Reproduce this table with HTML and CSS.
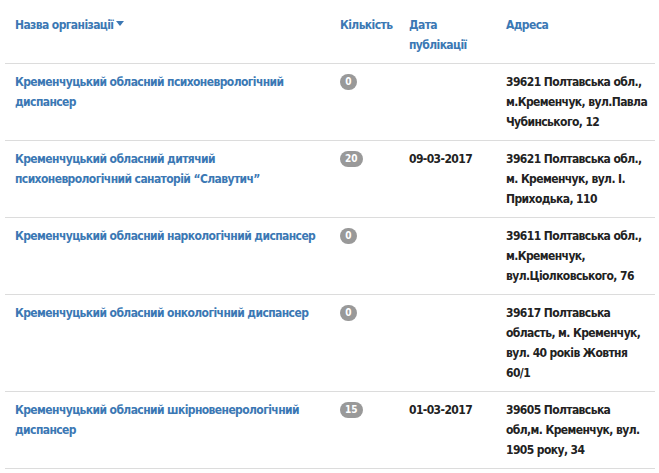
FILE: index.html
```html
<!DOCTYPE html>
<html lang="uk">
<head>
<meta charset="utf-8">
<link rel="stylesheet" href="styles.css">
</head>
<body>
<table class="orgs">
  <colgroup>
    <col class="c-name"><col class="c-count"><col class="c-date"><col class="c-addr">
  </colgroup>
  <thead>
    <tr>
      <th><a class="link" href="#">Назва організації<span class="caret"></span></a></th>
      <th><a class="link" href="#">Кількість</a></th>
      <th><a class="link" href="#">Дата публікації</a></th>
      <th class="addr"><a class="link" href="#">Адреса</a></th>
    </tr>
  </thead>
  <tbody>
    <tr>
      <td><a class="link" href="#">Кременчуцький обласний психоневрологічний диспансер</a></td>
      <td><span class="badge">0</span></td>
      <td class="date"></td>
      <td class="addr">39621 Полтавська обл., м.Кременчук, вул.Павла Чубинського, 12</td>
    </tr>
    <tr>
      <td><a class="link" href="#">Кременчуцький обласний дитячий психоневрологічний санаторій “Славутич”</a></td>
      <td><span class="badge">20</span></td>
      <td class="date">09-03-2017</td>
      <td class="addr">39621 Полтавська обл., м. Кременчук, вул. І. Приходька, 110</td>
    </tr>
    <tr>
      <td><a class="link" href="#">Кременчуцький обласний наркологічний диспансер</a></td>
      <td><span class="badge">0</span></td>
      <td class="date"></td>
      <td class="addr">39611 Полтавська обл., м.Кременчук, вул.Ціолковського, 76</td>
    </tr>
    <tr>
      <td><a class="link" href="#">Кременчуцький обласний онкологічний диспансер</a></td>
      <td><span class="badge">0</span></td>
      <td class="date"></td>
      <td class="addr">39617 Полтавська область, м. Кременчук, вул. 40 років Жовтня 60/1</td>
    </tr>
    <tr>
      <td><a class="link" href="#">Кременчуцький обласний шкірновенерологічний диспансер</a></td>
      <td><span class="badge">15</span></td>
      <td class="date">01-03-2017</td>
      <td class="addr">39605 Полтавська обл,м. Кременчук, вул. 1905 року, 34</td>
    </tr>
  </tbody>
</table>
</body>
</html>
```

FILE: styles.css
```css
html, body {
  margin: 0;
  padding: 0;
  background: #fff;
}

body {
  font-family: "DejaVu Sans Condensed", "DejaVu Sans", sans-serif;
  font-stretch: condensed;
  font-weight: bold;
  font-size: 12px;
  letter-spacing: -0.6px;
  line-height: 20px;
  color: #222;
}

.orgs {
  margin: 7px 0 0 5px;
  width: 650px;
  border-collapse: collapse;
  table-layout: fixed;
}

.c-name { width: 325px; }
.c-count { width: 69px; }
.c-date { width: 97px; }
.c-addr { width: 159px; }

.orgs th,
.orgs td {
  padding: 8px 10px;
  text-align: left;
  vertical-align: top;
}

.orgs th.addr,
.orgs td.addr {
  padding-right: 7px;
}

.orgs th {
  font-weight: bold;
}

.orgs tbody td {
  border-top: 1px solid #dcdcdc;
}

.orgs tbody tr:last-child td {
  border-bottom: 1px solid #dcdcdc;
}

.link {
  color: #3b78b4;
  text-decoration: none;
}

.caret {
  display: inline-block;
  width: 0;
  height: 0;
  margin-left: 3px;
  vertical-align: 3px;
  border-top: 5px solid #3b78b4;
  border-left: 4px solid transparent;
  border-right: 4px solid transparent;
}

.badge {
  display: inline-block;
  min-width: 7px;
  padding: 0 5px;
  height: 16px;
  line-height: 16px;
  margin-top: 2px;
  border-radius: 8px;
  background: #999;
  color: #fff;
  font-size: 10px;
  letter-spacing: 0;
  text-align: center;
  vertical-align: top;
}

.date,
.addr {
  color: #222;
}
```
